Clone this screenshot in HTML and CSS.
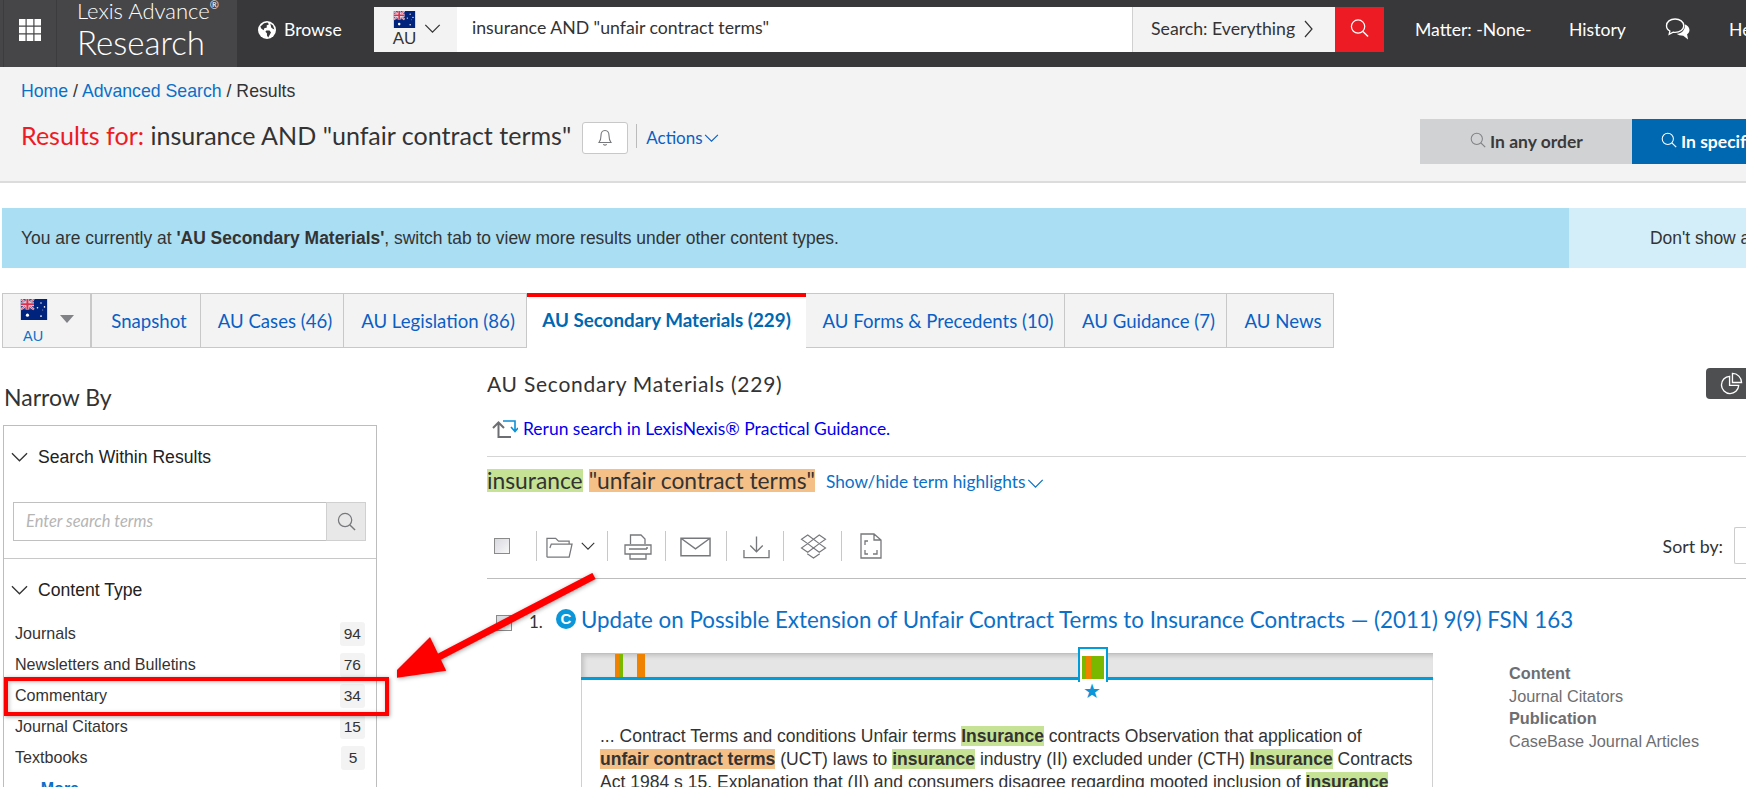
FILE: index.html
```html
<!DOCTYPE html>
<html lang="en">
<head>
<meta charset="utf-8">
<title>Lexis Advance Research</title>
<link rel="stylesheet" href="styles.css">
</head>
<body>
<svg class="defs" width="0" height="0" aria-hidden="true">
  <defs>
    <symbol id="flag" viewBox="0 0 30 24">
      <rect width="30" height="24" fill="#00247d"/>
      <rect width="15" height="12" fill="#3b4a9a"/>
      <path d="M0 0L15 12M15 0L0 12" stroke="#f2d6dc" stroke-width="2.4"/>
      <path d="M0 0L15 12M15 0L0 12" stroke="#cf4a63" stroke-width="1"/>
      <path d="M7.5 0V12M0 6H15" stroke="#f6e6ea" stroke-width="4"/>
      <path d="M7.5 0V12M0 6H15" stroke="#d9304f" stroke-width="2.4"/>
      <g fill="#fff">
        <circle cx="7.5" cy="18.5" r="1.8"/>
        <circle cx="23" cy="4.5" r=".9"/>
        <circle cx="23" cy="19.5" r="1"/>
        <circle cx="19" cy="10" r=".9"/>
        <circle cx="27" cy="9" r=".9"/>
        <circle cx="25" cy="12.5" r=".5"/>
      </g>
    </symbol>
    <symbol id="mag" viewBox="0 0 20 20">
      <circle cx="8.5" cy="8.5" r="7" fill="none" stroke="currentColor" stroke-width="1.3"/>
      <path d="M13.6 13.6L19 19" fill="none" stroke="currentColor" stroke-width="1.5"/>
    </symbol>
    <symbol id="chev" viewBox="0 0 18 10">
      <path d="M1 1L9 9L17 1" fill="none" stroke="currentColor" stroke-width="1.4"/>
    </symbol>
  </defs>
</svg>

<header class="topbar">
  <div class="brand-zone">
    <div class="apps">
      <svg class="apps-icon" viewBox="0 0 22 22"><path fill="#fff" d="M0 0h6.5v6.5H0zM7.7 0h6.6v6.5H7.7zM15.5 0H22v6.5h-6.5zM0 7.7h6.5v6.6H0zM7.7 7.7h6.6v6.6H7.7zM15.5 7.7H22v6.6h-6.5zM0 15.5h6.5V22H0zM7.7 15.5h6.6V22H7.7zM15.5 15.5H22V22h-6.5z"/></svg>
    </div>
    <div class="brand">
      <div class="brand-top">Lexis Advance<sup class="reg">®</sup></div>
      <div class="brand-main">Research</div>
    </div>
  </div>
  <a class="browse">
    <svg class="globe" viewBox="0 0 18 18"><circle cx="9" cy="9" r="9" fill="#fff"/><path fill="#38383a" d="M6 2.2L9.5 1.6L11 3.2L8.6 4.6L8.9 6.5L6.3 7.2L5.6 9.2L3.2 7.6L2.4 5.6zM8.4 9.4L11.5 9.6L13 11.4L11.6 14L10.2 16.4L9 14.6L8.9 12.2L7.4 10.8zM12.2 2.6L15 4.6L16.4 8.4L14.4 7.6L13.2 6.6L12.8 4.6z"/></svg>
    Browse
  </a>
  <div class="searchbar">
    <div class="juris">
      <div class="juris-flag">
        <svg class="flag-top"><use href="#flag"/></svg>
        <span>AU</span>
      </div>
      <svg class="juris-chev"><use href="#chev"/></svg>
    </div>
    <div class="query">insurance AND "unfair contract terms"</div>
    <div class="scope">Search: Everything
      <svg class="scope-chev" viewBox="0 0 9 18"><path d="M1 1L8 9L1 17" fill="none" stroke="#333" stroke-width="1.2"/></svg>
    </div>
    <div class="go"><svg class="go-icon"><use href="#mag"/></svg></div>
  </div>
  <nav class="topnav">
    <a class="nav-matter">Matter: -None-</a>
    <a class="nav-history">History</a>
    <svg class="chat" viewBox="0 0 26 24"><path d="M10 1C4.800 1 1 4 1 8C1 10.500 2.500 12.500 4.500 13.600L3.800 17L8 14.800C8.600 14.900 9.300 15 10 15C15 15 19 12 19 8C19 4 15 1 10 1Z" fill="#38383a" stroke="#fff" stroke-width="1.400"/><path d="M20 6.500C22.800 7.500 25 9.800 25 12.500C25 14.500 24 16 22.500 17L23.500 22.500L18.500 18.500C15.500 18.500 13 17.800 11.500 16.500C16 16.500 21 13 20 6.500Z" fill="#fff"/></svg>
    <a class="nav-help">Help</a>
  </nav>
</header>

<section class="subhead">
  <div class="crumbs"><a>Home</a> / <a>Advanced Search</a> / Results</div>
  <div class="title-row">
    <h1 class="results-title"><span class="rf">Results for:</span> insurance AND "unfair contract terms"</h1>
    <button class="bell-btn" type="button">
      <svg class="bell" viewBox="0 0 16 18"><path d="M8 1.500C5 1.500 4 4 4 6.500C4 10 3.300 12 2 13.500H14C12.700 12 12 10 12 6.500C12 4 11 1.500 8 1.500Z" fill="none" stroke="#77787b" stroke-width="1.100"/><path d="M6.500 15C6.800 16.500 9.200 16.500 9.500 15" fill="none" stroke="#77787b" stroke-width="1.100"/></svg>
    </button>
    <span class="vsep"></span>
    <a class="actions">Actions<svg class="actions-chev"><use href="#chev"/></svg></a>
    <div class="order">
      <div class="order-any"><svg class="order-mag"><use href="#mag"/></svg>In any order</div>
      <div class="order-spec"><svg class="order-mag"><use href="#mag"/></svg>In specific order</div>
    </div>
  </div>
</section>

<section class="notice">
  <div class="notice-main">You are currently at <b>'AU Secondary Materials'</b>, switch tab to view more results under other content types.</div>
  <div class="notice-side">Don't show again</div>
</section>

<div class="tabs">
  <div class="tab tab-flag">
    <svg class="flag-tab"><use href="#flag"/></svg>
    <i class="caret"></i>
    <span class="flag-au">AU</span>
  </div>
  <a class="tab t-snap">Snapshot</a>
  <a class="tab t-cases">AU Cases (46)</a>
  <a class="tab t-leg">AU Legislation (86)</a>
  <a class="tab active">AU Secondary Materials (229)</a>
  <a class="tab t-forms">AU Forms &amp; Precedents (10)</a>
  <a class="tab t-guid">AU Guidance (7)</a>
  <a class="tab t-news">AU News</a>
</div>

<main class="main">
  <aside class="side">
    <h2 class="narrow">Narrow By</h2>
    <div class="facets">
      <section class="facet facet-search">
        <h3 class="facet-head"><svg class="facet-chev"><use href="#chev"/></svg>Search Within Results</h3>
        <div class="within">
          <div class="within-input">Enter search terms</div>
          <div class="within-btn"><svg class="within-mag"><use href="#mag"/></svg></div>
        </div>
      </section>
      <section class="facet">
        <h3 class="facet-head"><svg class="facet-chev"><use href="#chev"/></svg>Content Type</h3>
        <ul class="facet-list">
          <li><span>Journals</span><b class="count">94</b></li>
          <li><span>Newsletters and Bulletins</span><b class="count">76</b></li>
          <li><span>Commentary</span><b class="count">34</b></li>
          <li><span>Journal Citators</span><b class="count">15</b></li>
          <li><span>Textbooks</span><b class="count">5</b></li>
        </ul>
        <a class="more"><span class="more-arrows">▸ ▸</span>More</a>
      </section>
    </div>
  </aside>

  <div class="content">
    <div class="content-head">
      <h2 class="content-title">AU Secondary Materials (229)</h2>
      <button class="pie-btn" type="button">
        <svg class="pie" viewBox="0 0 24 24"><path d="M10 4.500A9 9 0 1 0 19.500 14H10Z" fill="none" stroke="#fff" stroke-width="1.400"/><path d="M13 1.500A9.500 9.500 0 0 1 22.500 11H13Z" fill="none" stroke="#fff" stroke-width="1.400"/></svg>
      </button>
    </div>
    <div class="rerun">
      <svg class="rerun-icon" viewBox="0 0 26 20"><path d="M1 9L6.500 3.500L12 9M6.500 4V18H19" fill="none" stroke="#6d6e71" stroke-width="2"/><path d="M11 2H23V11M19 8L23 12.500L26 9" fill="none" stroke="#0a8fd6" stroke-width="1.600"/></svg>
      <a class="rerun-link">Rerun search in LexisNexis® Practical Guidance.</a>
    </div>
    <div class="terms">
      <mark class="t-green">insurance</mark>
      <mark class="t-orange">"unfair contract terms"</mark>
      <a class="showhide">Show/hide term highlights<svg class="showhide-chev"><use href="#chev"/></svg></a>
    </div>
    <div class="toolbar">
      <span class="box tool-check"></span>
      <span class="tool t-folder">
        <svg class="ti-folder" viewBox="0 0 28 24"><path d="M1 22.500V3H10L13 6H24V9M1 22.500H24L27 9H5.500L4 13" fill="none" stroke="#77787b" stroke-width="1.300"/></svg>
        <svg class="ti-chev"><use href="#chev"/></svg>
      </span>
      <span class="tool t-print">
        <svg class="ti-print" viewBox="0 0 28 26"><path d="M6.500 10V1H17L21 5V10M1 11H27V20H1ZM6 20V25H22V20M5 15H23" fill="none" stroke="#77787b" stroke-width="1.300"/><circle cx="23" cy="14" r="1" fill="#77787b"/></svg>
      </span>
      <span class="tool t-mail">
        <svg class="ti-mail" viewBox="0 0 32 20"><path d="M1 1H31V19H1ZM1 1L16 12L31 1" fill="none" stroke="#77787b" stroke-width="1.500"/></svg>
      </span>
      <span class="tool t-dl">
        <svg class="ti-dl" viewBox="0 0 28 24"><path d="M14 1V17M7.500 10.500L14 17L20.500 10.500M1 15V23H27V15" fill="none" stroke="#77787b" stroke-width="1.400"/></svg>
      </span>
      <span class="tool t-drop">
        <svg class="ti-drop" viewBox="0 0 28 26"><path d="M8 1L14 5.500L8 10L1.500 5.500ZM20 1L26.500 5.500L20 10L14 5.500ZM8 10L14 14.500L8 19L1.500 14.500ZM20 10L26.500 14.500L20 19L14 14.500ZM7.500 20.500L14 25L20.500 20.500" fill="none" stroke="#77787b" stroke-width="1.200"/></svg>
      </span>
      <span class="tool t-full">
        <svg class="ti-full" viewBox="0 0 22 26"><path d="M1 1H14L21 7V25H1ZM14 1V7H21M5 12V8H8M5 17V21H8M13 21H17V17" fill="none" stroke="#77787b" stroke-width="1.300"/></svg>
      </span>
      <div class="sort">
        <span>Sort by:</span>
        <span class="sort-box"></span>
      </div>
    </div>

    <article class="result">
      <div class="result-head">
        <span class="box result-check"></span>
        <span class="result-num">1.</span>
        <span class="c-badge">C</span>
        <a class="result-title">Update on Possible Extension of Unfair Contract Terms to Insurance Contracts — (2011) 9(9) FSN 163</a>
      </div>
      <div class="result-body">
        <div class="snippet">
          <div class="hitbar">
            <i class="hit h1"></i>
            <i class="hit h2"></i>
            <div class="hit-active"><i class="hit-fill"></i></div>
            <span class="hit-star">★</span>
          </div>
          <p class="snippet-text">... Contract Terms and conditions Unfair terms <b class="hl-g">Insurance</b> contracts Observation that application of <b class="hl-o">unfair contract terms</b> (UCT) laws to <b class="hl-g">insurance</b> industry (II) excluded under (CTH) <b class="hl-g">Insurance</b> Contracts Act 1984 s 15. Explanation that (II) and consumers disagree regarding mooted inclusion of <b class="hl-g">insurance</b></p>
        </div>
        <dl class="meta">
          <dt>Content</dt><dd>Journal Citators</dd>
          <dt>Publication</dt><dd>CaseBase Journal Articles</dd>
        </dl>
      </div>
    </article>
  </div>
</main>

<div class="callout-box"></div>
<svg class="callout-arrow" viewBox="0 0 220 120">
  <path d="M197 3L38 86M32 70L1 101L44 95Z" fill="#f00" stroke="#f00" stroke-width="7" stroke-linejoin="miter"/>
</svg>
</body>
</html>
```
FILE: styles.css
```css
* { box-sizing: border-box; }
html, body { margin: 0; padding: 0; }
body {
  width: 1746px;
  height: 787px;
  overflow: hidden;
  position: relative;
  background: #fff;
  color: #333;
  font-family: Lato, "Liberation Sans", sans-serif;
}
a { text-decoration: none; }
h1, h2, h3, p, ul, dl, dd { margin: 0; padding: 0; font-weight: normal; }
ul { list-style: none; }
.defs { position: absolute; }

/* top bar */
.topbar {
  display: flex;
  align-items: stretch;
  height: 67px;
  background: #38383a;
  color: #fff;
}
.brand-zone { display: flex; width: 237px; background: #464648; padding-left: 3px; }
.apps {
  width: 54px;
  display: flex;
  align-items: center;
  justify-content: center;
  border-left: 1px solid #3c3c3e;
  border-right: 1px solid #3c3c3e;
  padding-bottom: 7px;
}
.apps-icon { width: 22px; height: 22px; }
.brand { padding-left: 20px; overflow: hidden; margin-top: -1px; }
.brand-top { font-weight: 300; font-size: 22px; line-height: 24px; white-space: nowrap; }
.reg { font-size: 11px; line-height: 0; vertical-align: 10px; font-weight: 400; }
.brand-main { font-weight: 300; font-size: 33px; line-height: 38px; }
.browse {
  width: 137px;
  display: flex;
  align-items: center;
  gap: 8px;
  padding-left: 21px;
  font-size: 17.600px;
  color: #fff;
  padding-bottom: 8px;
}
.globe { width: 18px; height: 18px; }
.searchbar { display: flex; width: 1010px; height: 45px; margin-top: 7px; background: #fff; }
.juris { width: 83px; background: #f3f3f3; display: flex; color: #333; padding-left: 18px; }
.juris-flag { width: 25px; display: flex; flex-direction: column; align-items: center; padding-top: 4px; font-family: "Liberation Sans", sans-serif; font-size: 17px; line-height: 21px; }
.flag-top { width: 25px; height: 17px; display: block; }
.juris-chev { width: 17px; height: 9px; margin: 17px 0 0 7px; color: #333; }
.query { flex: 1; padding-left: 15px; font-size: 17.700px; line-height: 41px; color: #333; }
.scope {
  width: 203px;
  background: #f3f3f3;
  border-left: 1px solid #d0d0d0;
  padding-left: 18px;
  font-size: 17.700px;
  line-height: 44px;
  color: #333;
  display: flex;
  align-items: flex-start;
  white-space: nowrap;
}
.scope-chev { width: 9px; height: 18px; margin: 13px 0 0 9px; }
.go { width: 49px; background: #ed1c24; display: flex; align-items: center; justify-content: center; color: #fff; padding-bottom: 3px; }
.go-icon { width: 19px; height: 24px; }
.topnav { display: flex; align-items: center; padding: 0 0 9px 31px; font-size: 17.600px; white-space: nowrap; flex: 1; overflow: hidden; }
.nav-matter { width: 154px; flex: none; color: #fff; }
.nav-history { width: 96px; flex: none; color: #fff; }
.chat { width: 26px; height: 23px; flex: none; }
.nav-help { margin-left: 38px; color: #fff; flex: none; }

/* sub header */
.subhead { height: 116px; background: #f3f3f3; border-bottom: 2px solid #dcdcdc; padding-top: 14px; }
.crumbs { font-family: "Liberation Sans", sans-serif; font-size: 17.700px; line-height: 20px; padding-left: 21px; color: #333; }
.crumbs a { color: #0a70c8; }
.title-row { display: flex; align-items: flex-start; margin-top: 18px; padding-left: 21px; }
.results-title { font-size: 25.050px; line-height: 32px; white-space: nowrap; color: #333; }
.rf { color: #ed1c24; }
.bell-btn { width: 46px; height: 32px; margin: 3px 0 0 11px; background: #fff; border: 1px solid #c8c8c8; border-radius: 3px; padding: 0; display: flex; align-items: center; justify-content: center; }
.bell { width: 16px; height: 18px; }
.vsep { width: 1px; height: 24px; margin: 5px 0 0 8px; background: #bbb; }
.actions { margin: 6px 0 0 9px; font-size: 17px; line-height: 26px; color: #0a5fc4; display: flex; align-items: center; }
.actions-chev { width: 15px; height: 8px; margin-left: 1px; color: #0a5fc4; }
.order { margin-left: auto; width: 326px; height: 45px; display: flex; overflow: hidden; flex: none; font-weight: 700; font-size: 17.500px; white-space: nowrap; }
.order-any { width: 212px; flex: none; background: #d1d2d4; color: #3a3a3c; display: flex; align-items: center; padding-left: 50px; }
.order-spec { width: 212px; flex: none; background: #0067b1; color: #fff; display: flex; align-items: center; padding-left: 29px; }
.order-mag { width: 16px; height: 16px; margin: -3px 4px 0 0; }
.order-any .order-mag { color: #808285; }

/* notice */
.notice { display: flex; height: 60px; margin: 25px 0 0 2px; font-family: "Liberation Sans", sans-serif; font-size: 17.450px; line-height: 60px; white-space: nowrap; }
.notice-main { width: 1567px; background: #a9def3; padding-left: 19px; }
.notice-side { flex: 1; background: #d3eef9; padding-left: 81px; overflow: hidden; }

/* tabs */
.tabs { display: flex; height: 55px; margin: 25px 0 0 2px; font-size: 18.600px; }
.tab {
  height: 55px;
  background: #f3f3f3;
  border: 1px solid #c8c8c8;
  border-left-width: 0;
  border-right-width: 1px;
  color: #0a5fc4;
  line-height: 54px;
  padding-left: 6px;
  text-align: center;
  white-space: nowrap;
  flex: none;
}
.tab-flag { width: 90px; position: relative; border-left-width: 1px; border-right-width: 2px; padding-left: 0; }
.flag-tab { position: absolute; left: 16px; top: 5px; width: 30px; height: 21px; }
.caret { position: absolute; left: 57px; top: 21px; border: 7px solid transparent; border-top: 8px solid #808285; border-bottom: 0; }
.flag-au { position: absolute; left: 20px; top: 33px; font-size: 14.500px; line-height: 18px; color: #0a70c8; font-family: "Liberation Sans", sans-serif; }
.t-snap { width: 109px; }
.t-cases { width: 143px; }
.t-leg { width: 183px; }
.t-forms { width: 259px; }
.t-guid { width: 162px; }
.t-news { width: 107px; }
.active { width: 279px; background: #fff; border-width: 4px 0 0; border-top-color: #f00; border-right: 0; font-weight: 700; color: #0067b1; font-size: 18.800px; line-height: 45px; border-bottom: 0; padding-left: 0; }

/* layout */
.main { display: flex; }
.side { width: 374px; margin-left: 3px; flex: none; padding-top: 35px; }
.narrow { font-size: 23px; line-height: 28px; padding-left: 1px; color: #333; }
.facets { margin-top: 14px; height: 500px; border: 1px solid #bdbdbd; }
.facet { padding: 18px 10px 0 10px; }
.facet-search { height: 133px; border-bottom: 1px solid #c8c8c8; padding-top: 18px; }
.facet-head { display: flex; align-items: center; font-family: "Liberation Sans", sans-serif; font-size: 17.600px; line-height: 26px; color: #222; }
.facet-chev { width: 17px; height: 10px; margin: 0 10px 0 -3px; color: #333; flex: none; }
.within { display: flex; height: 39px; margin: 32px 0 0 -1px; }
.within-input { flex: 1; border: 1px solid #c0c0c0; border-right: 0; background: #fff; padding-left: 12px; font-style: italic; font-size: 16.500px; line-height: 36px; color: #b5b5b5; }
.within-btn { width: 40px; background: #e8e8e8; border: 1px solid #d0d0d0; display: flex; align-items: center; justify-content: center; color: #77787b; }
.within-mag { width: 19px; height: 19px; }
.facet-list { margin: 15px 1px 0 0; font-family: "Liberation Sans", sans-serif; font-size: 16.100px; }
.facet-list li { display: flex; justify-content: space-between; align-items: center; height: 31px; padding-left: 1px; }
.count { min-width: 24px; height: 24px; background: #f3f3f3; border-radius: 3px; font-weight: 400; text-align: center; line-height: 24px; padding: 0 4px; color: #333; font-size: 15.500px; }
.more { display: block; margin-top: 3px; padding-left: 6px; font-family: "Liberation Sans", sans-serif; font-weight: 700; font-size: 16px; line-height: 26px; color: #0a70c8; }
.more-arrows { color: #aaa; font-size: 10px; margin-right: 8px; }

/* content */
.content { flex: 1; min-width: 0; margin-left: 110px; padding-top: 20px; }
.content-head { display: flex; align-items: center; justify-content: space-between; height: 31px; }
.content-title { font-size: 21px; letter-spacing: .75px; color: #333; }
.pie-btn { width: 40px; height: 31px; padding: 0 0 0 14px; background: #4e4f51; border: 0; border-radius: 4px 0 0 4px; display: flex; align-items: center; }
.pie { width: 23px; height: 23px; }
.rerun { display: flex; align-items: center; height: 43px; margin-top: 15px; padding: 1px 0 14px 5px; border-bottom: 1px solid #d5d5d5; }
.rerun-icon { width: 26px; height: 20px; margin-right: 5px; }
.rerun-link { font-size: 17.450px; color: #0000ee; }
.terms { display: flex; align-items: flex-start; height: 23px; margin-top: 12px; font-size: 22.800px; line-height: 23px; color: #333; }
.t-green { background: #c6e295; color: inherit; }
.t-orange { background: #f4c088; color: inherit; margin-left: 6px; }
.showhide { margin-left: 11px; font-size: 17.300px; line-height: 26px; color: #0a70c8; display: flex; align-items: center; }
.showhide-chev { width: 17px; height: 9px; margin: 3px 0 0 2px; color: #0a70c8; }

.toolbar { display: flex; align-items: center; height: 48px; margin-top: 39px; padding-bottom: 18px; border-bottom: 1px solid #bdbdbd; }
.box { display: block; flex: none; border: 1px solid #8a8a8a; background: linear-gradient(135deg, #d8d8e0, #f8f8f8); }
.tool-check { width: 16px; height: 16px; margin: 0 26px 0 7px; }
.tool { height: 30px; border-left: 1px solid #c8c8c8; display: flex; align-items: center; flex: none; }
.t-folder { width: 71px; padding-left: 10px; }
.ti-folder { width: 27px; height: 24px; margin: 2px 0 0 -1px; }
.ti-chev { width: 14px; height: 8px; margin-left: 8px; color: #333; }
.t-print { width: 58px; padding-left: 16px; }
.ti-print { width: 28px; height: 26px; margin-top: 2px; }
.t-mail { width: 61px; padding-left: 14px; }
.ti-mail { width: 31px; height: 20px; margin-top: 2px; }
.t-dl { width: 57px; padding-left: 16px; }
.ti-dl { width: 27px; height: 24px; margin-top: 3px; }
.t-drop { width: 58px; padding-left: 16px; }
.ti-drop { width: 27px; height: 25px; margin-top: 1px; }
.t-full { padding-left: 18px; }
.ti-full { width: 22px; height: 26px; margin-top: 1px; }
.sort { margin-left: auto; display: flex; align-items: center; font-size: 17.800px; color: #333; }
.sort-box { width: 12px; height: 37px; margin: 0 0 0 11px; border: 1px solid #ccc; border-right: 0; border-radius: 2px 0 0 2px; }

/* result */
.result-head { display: flex; align-items: center; height: 26px; margin-top: 27px; }
.result-check { width: 16px; height: 16px; margin: 8px 0 0 9px; }
.result-num { margin-left: 17px; width: 27px; font-size: 17px; color: #333; padding-top: 4px; }
.c-badge { width: 20px; height: 20px; border-radius: 50%; background: #0a96d8; color: #fff; font: 700 15px/20px "Liberation Sans", sans-serif; text-align: center; margin-top: -1px; }
.result-title { margin-left: 5px; font-size: 22.350px; color: #0a70c8; white-space: nowrap; }
.result-body { display: flex; margin: 21px 0 0 94px; }
.snippet { width: 852px; height: 200px; flex: none; border: 1px solid #d0d0d0; border-top: 0; }
.hitbar { position: relative; height: 27px; background: #e5e5e5; box-shadow: inset 3px 2px 4px rgba(0,0,0,.15); border-top: 1px solid #c0c0c0; border-bottom: 3px solid #009ddb; margin: 0 -1px; }
.hit { position: absolute; top: 0; bottom: 0; width: 8px; background: linear-gradient(90deg, #ef8200 50%, #7ab800 50%); }
.h1 { left: 34px; }
.h2 { left: 56px; background: #ef8200; }
.hit-active { position: absolute; left: 497px; top: -7px; width: 30px; height: 35px; background: #fff; border: 2px solid #009ddb; border-bottom: 0; padding: 7px 2px 3px; }
.hit-fill { display: block; height: 100%; background: linear-gradient(90deg, #7ab800 20%, #ef8200 20%, #ef8200 40%, #7ab800 40%); }
.hit-star { position: absolute; left: 502px; top: 26px; font: 20px/22px "DejaVu Sans", sans-serif; color: #0a96d8; }
.snippet-text { padding: 45px 14px 0 18px; font-family: "Liberation Sans", sans-serif; font-size: 17.550px; line-height: 22.800px; color: #333; }
.hl-g { background: #c6e295; }
.hl-o { background: #f4c088; white-space: nowrap; }
.meta { margin: 9px 0 0 76px; font-family: "Liberation Sans", sans-serif; font-size: 16.300px; line-height: 22.500px; color: #6d6e71; white-space: nowrap; }
.meta dt { font-weight: 700; }

/* annotation overlays */
.callout-box { position: absolute; left: 4px; top: 677px; width: 385px; height: 39px; border: 4px solid #f00; box-shadow: 1px 1px 4px rgba(0,0,0,.35), inset 1px 1px 4px rgba(0,0,0,.25); }
.callout-arrow { position: absolute; left: 397px; top: 573px; width: 220px; height: 120px; filter: drop-shadow(1px 1px 2px rgba(0,0,0,.35)); }
```
